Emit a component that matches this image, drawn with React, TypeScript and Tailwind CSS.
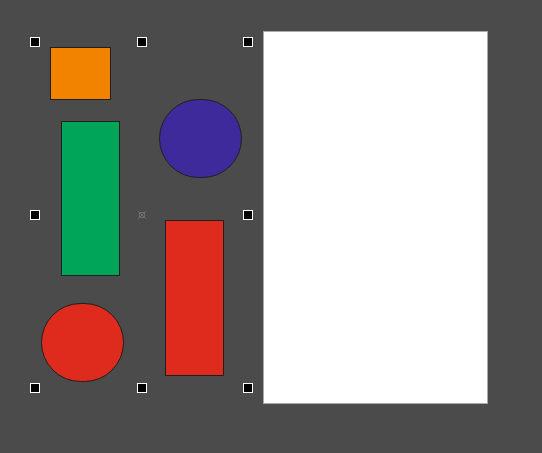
const handles = [
  { x: 30, y: 37 },
  { x: 137, y: 37 },
  { x: 243, y: 37 },
  { x: 30, y: 210 },
  { x: 243, y: 210 },
  { x: 30, y: 383 },
  { x: 137, y: 383 },
  { x: 243, y: 383 },
];

export default function App() {
  return (
    <div className="relative w-[542px] h-[453px] overflow-hidden bg-[#4b4b4b]">
      {/* Page */}
      <div className="absolute left-[263px] top-[31px] w-[225px] h-[373px] bg-white border border-[#a9a9a9]" />

      {/* Shapes */}
      <div className="absolute left-[50px] top-[47px] w-[61px] h-[53px] bg-[#f28300] border border-[#1f1f1f]" />
      <div className="absolute left-[61px] top-[121px] w-[59px] h-[155px] bg-[#00a55a] border border-[#1f1f1f]" />
      <div className="absolute left-[159px] top-[99px] w-[83px] h-[79px] rounded-full bg-[#3e2a9b] border border-[#1f1f1f]" />
      <div className="absolute left-[41px] top-[303px] w-[83px] h-[79px] rounded-full bg-[#de2b1d] border border-[#1f1f1f]" />
      <div className="absolute left-[165px] top-[220px] w-[59px] h-[156px] bg-[#de2b1d] border border-[#1f1f1f]" />

      {/* Selection handles */}
      {handles.map((h, i) => (
        <div
          key={i}
          className="absolute w-[10px] h-[10px] bg-black border border-white"
          style={{ left: h.x, top: h.y }}
        />
      ))}

      {/* Rotation center */}
      <svg
        className="absolute left-[138px] top-[211px]"
        width="8"
        height="8"
        viewBox="0 0 8 8"
        fill="none"
        stroke="#6e6e6e"
        strokeWidth="1"
      >
        <rect x="1.5" y="1.5" width="5" height="5" />
        <path d="M0 0L8 8M8 0L0 8" />
      </svg>
    </div>
  );
}
